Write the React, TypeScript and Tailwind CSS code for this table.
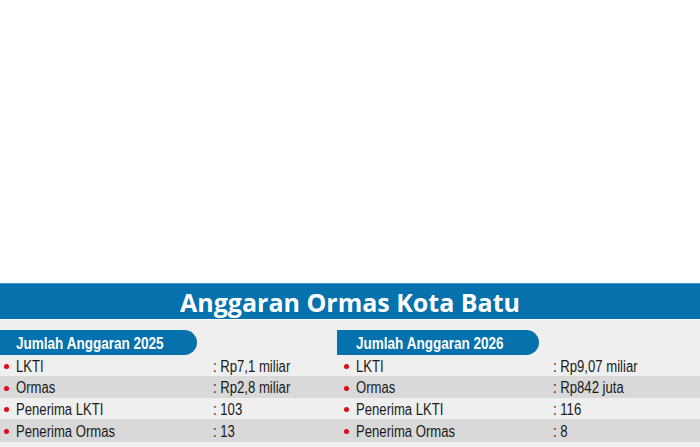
import React from "react";

const sans = { fontFamily: '"Liberation Sans", Arial, sans-serif' };

type Row = [string, string];
const left: Row[] = [
  ["LKTI", ": Rp7,1 miliar"],
  ["Ormas", ": Rp2,8 miliar"],
  ["Penerima LKTI", ": 103"],
  ["Penerima Ormas", ": 13"],
];
const right: Row[] = [
  ["LKTI", ": Rp9,07 miliar"],
  ["Ormas", ": Rp842 juta"],
  ["Penerima LKTI", ": 116"],
  ["Penerima Ormas", ": 8"],
];
const heights = ["h-[21px]", "h-[22px]", "h-[21px]", "h-[23px]"];
const bgs = ["bg-[#efefef]", "bg-[#d9d9d9]", "bg-[#efefef]", "bg-[#d9d9d9]"];

function Narrow({ children }: { children: React.ReactNode }) {
  return <span className="inline-block whitespace-nowrap origin-left scale-x-[0.82]">{children}</span>;
}

function Cell({ row, pad }: { row: Row; pad: string }) {
  return (
    <div className={`flex items-center ${pad}`}>
      <span className="w-[5px] h-[5px] rounded-full bg-[#e30613] shrink-0" />
      <span className="ml-[7px] w-[197px] shrink-0">
        <Narrow>{row[0]}</Narrow>
      </span>
      <span>
        <Narrow>{row[1]}</Narrow>
      </span>
    </div>
  );
}

export default function App() {
  return (
    <div className="w-[700px] h-[447px] bg-white overflow-hidden flex flex-col">
      <div className="h-[283px] shrink-0" />
      <div className="h-[36px] shrink-0 bg-[#0571ad] border-t border-[#4a96c7] flex items-center justify-center">
        <span
          className="text-white font-bold text-[25px] leading-none pt-[1px]"
          style={{ fontFamily: '"Open Sans", sans-serif' }}
        >
          Anggaran Ormas Kota Batu
        </span>
      </div>
      <div className="h-[1px] bg-white shrink-0" />
      <div className="flex-1 bg-[#efefef] text-[#1a1a1a] text-[16px] leading-none" style={sans}>
        <div className="h-[10px]" />
        <div className="flex h-[25px]">
          <div className="w-[337px] shrink-0">
            <div className="w-[197px] h-[25px] bg-[#0571ad] rounded-r-full flex items-center pl-[16px] pt-[1px] text-white font-bold text-[16.5px]">
              <Narrow>Jumlah Anggaran 2025</Narrow>
            </div>
          </div>
          <div className="w-[202px] h-[25px] bg-[#0571ad] rounded-r-full flex items-center pl-[19px] pt-[1px] text-white font-bold text-[16.5px]">
            <Narrow>Jumlah Anggaran 2026</Narrow>
          </div>
        </div>
        {left.map((r, i) => (
          <div key={i} className={`flex ${heights[i]} ${bgs[i]} pt-[2px]`}>
            <div className="w-[337px] shrink-0 flex">
              <Cell row={r} pad="pl-[4px]" />
            </div>
            <div className="flex">
              <Cell row={right[i]} pad="pl-[7px]" />
            </div>
          </div>
        ))}
      </div>
    </div>
  );
}
